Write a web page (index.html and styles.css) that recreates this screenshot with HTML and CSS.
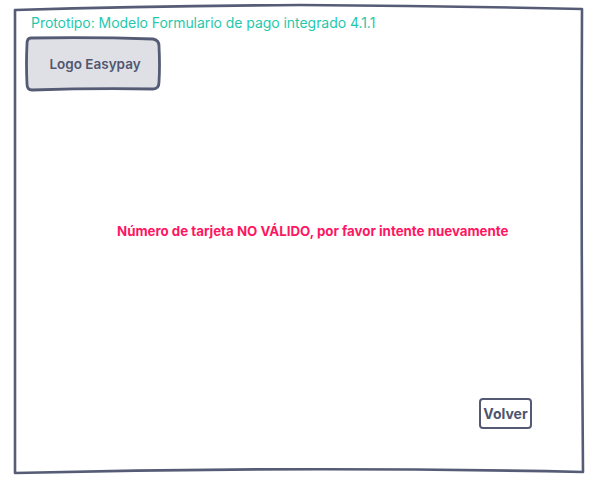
FILE: index.html
```html
<!DOCTYPE html>
<html lang="es">
<head>
<meta charset="utf-8">
<title>Prototipo: Modelo Formulario de pago integrado 4.1.1</title>
<link rel="stylesheet" href="styles.css">
</head>
<body>
<div class="page">
  <svg class="frame" width="603" height="487" viewBox="0 0 603 487" aria-hidden="true">
    <path d="M15 10 Q150 6 300 5 Q450 6 582 9 Q581 240 583 472 Q300 466 15 473 Q14 240 15 10 Z" fill="none" stroke="#565c76" stroke-width="2.6" stroke-linejoin="round"/>
  </svg>
  <div class="content">
    <h1 class="title">Prototipo: Modelo Formulario de pago integrado 4.1.1</h1>
    <div class="logo">
      <svg class="logo-shape" width="136" height="56" viewBox="0 0 136 56" aria-hidden="true">
        <path d="M6 2 Q70 1 128 3 Q134 4 134 10 Q135 30 134 46 Q134 53 128 53 Q70 52 7 54 Q2 54 2 48 Q1 28 2 8 Q2 2 6 2 Z" fill="#dfe0e5" stroke="#555b74" stroke-width="2.8" stroke-linejoin="round"/>
      </svg>
      <span class="logo-text">Logo Easypay</span>
    </div>
    <p class="error">Número de tarjeta NO VÁLIDO, por favor intente nuevamente</p>
    <div class="actions">
      <button class="btn" type="button">Volver</button>
    </div>
  </div>
</div>
</body>
</html>
```

FILE: styles.css
```css
* { box-sizing: border-box; }
html, body {
  margin: 0;
  padding: 0;
  background: #ffffff;
}
body {
  font-family: Inter, "Noto Sans", "Liberation Sans", sans-serif;
  color: #4d5470;
}
.page {
  position: relative;
  width: 603px;
  height: 487px;
  overflow: hidden;
}
.frame {
  position: absolute;
  left: 0;
  top: 0;
  pointer-events: none;
}
.content {
  position: relative;
  display: flex;
  flex-direction: column;
  padding: 14px 0 0 0;
  height: 100%;
}
.title {
  margin: 0 0 0 31px;
  font-size: 14px;
  line-height: 17px;
  font-weight: 400;
  color: #1fc8ad;
  letter-spacing: -0.05px;
}
.logo {
  position: relative;
  margin: 5px 0 0 25px;
  width: 136px;
  height: 56px;
  display: flex;
  align-items: center;
  justify-content: center;
}
.logo-shape {
  position: absolute;
  left: 0;
  top: 0;
}
.logo-text {
  position: relative;
  font-size: 13.5px;
  font-weight: 600;
  color: #505670;
  margin: 0 0 0 4px;
}
.error {
  margin: 131px 0 0 117px;
  font-size: 13.3px;
  line-height: 16px;
  font-weight: 700;
  color: #ff1663;
}
.actions {
  display: flex;
  justify-content: flex-end;
  padding-right: 71px;
  margin-top: 159px;
}
.btn {
  width: 53px;
  height: 31px;
  padding: 0;
  border: 2.5px solid #545a73;
  border-radius: 4px;
  background: #ffffff;
  font-family: inherit;
  font-size: 14px;
  font-weight: 700;
  color: #4d5470;
}
```
